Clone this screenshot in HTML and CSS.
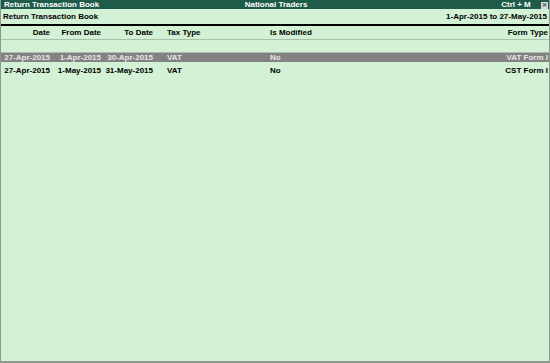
FILE: index.html
```html
<!DOCTYPE html>
<html>
<head>
<meta charset="utf-8">
<link rel="stylesheet" href="styles.css">
</head>
<body>
<div class="window">
  <div class="titlebar">
    <span class="tb-left">Return Transaction Book</span>
    <span class="tb-center">National Traders</span>
    <span class="tb-right">Ctrl + M <span class="close">✕</span></span>
  </div>
  <div class="subheader">
    <span>Return Transaction Book</span>
    <span>1-Apr-2015 to 27-May-2015</span>
  </div>
  <div class="grid colhead">
    <span class="r">Date</span>
    <span class="r">From Date</span>
    <span class="r">To Date</span>
    <span class="l tax">Tax Type</span>
    <span class="l">Is Modified</span>
    <span class="r last">Form Type</span>
  </div>
  <div class="blank"></div>
  <div class="grid row sel">
    <span class="r">27-Apr-2015</span>
    <span class="r">1-Apr-2015</span>
    <span class="r">30-Apr-2015</span>
    <span class="l tax">VAT</span>
    <span class="l">No</span>
    <span class="r last">VAT Form I</span>
  </div>
  <div class="grid row">
    <span class="r">27-Apr-2015</span>
    <span class="r">1-May-2015</span>
    <span class="r">31-May-2015</span>
    <span class="l tax">VAT</span>
    <span class="l">No</span>
    <span class="r last">CST Form I</span>
  </div>
</div>
</body>
</html>
```
FILE: styles.css
```css
html, body {
  margin: 0;
  padding: 0;
}
body {
  font-family: "Liberation Sans", Arial, sans-serif;
  font-weight: bold;
  font-size: 8px;
  color: #000;
}
.window {
  width: 550px;
  height: 363px;
  box-sizing: border-box;
  background: #d3f1d4;
  border-left: 1px solid #8c9a8c;
  border-right: 1px solid #8c9a8c;
  border-bottom: 2px solid #8c9a8c;
}
.titlebar {
  height: 9px;
  line-height: 9px;
  background: #1f5b49;
  color: #fff;
  display: grid;
  grid-template-columns: 1fr auto 1fr;
  padding: 0 1px 0 3px;
}
.tb-center {
  text-align: center;
}
.tb-right {
  text-align: right;
}
.close {
  display: inline-block;
  width: 7px;
  height: 7px;
  line-height: 7px;
  font-size: 6px;
  text-align: center;
  background: #d8d8d8;
  color: #1f5b49;
  margin-left: 8px;
  vertical-align: 0;
}
.subheader {
  height: 15px;
  line-height: 15px;
  display: flex;
  justify-content: space-between;
  padding: 0 2px 0 2px;
  border-bottom: 2px solid #000;
}
.grid {
  display: grid;
  grid-template-columns: 51px 51px 52px 113px 1fr 120px;
}
.grid span {
  white-space: nowrap;
}
.r { text-align: right; padding-right: 2px; }
.l { padding-left: 2px; }
.tax { padding-left: 12px; }
.last { padding-right: 1px; }
.colhead {
  height: 13px;
  line-height: 13px;
  border-bottom: 1px solid #a9bfa9;
}
.blank {
  height: 12px;
  border-bottom: 1px solid #a9bfa9;
}
.row {
  height: 13px;
  line-height: 13px;
}
.row.sel {
  height: 9px;
  line-height: 9px;
  background: #828282;
  color: #e6e6e6;
  margin-bottom: 2px;
}
```
